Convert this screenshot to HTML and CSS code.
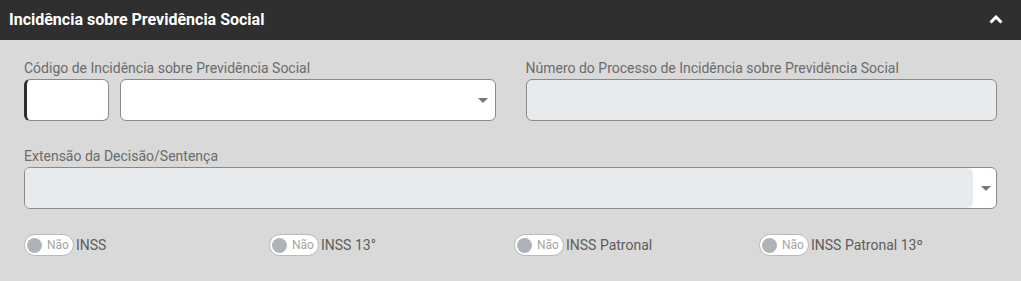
FILE: index.html
```html
<!DOCTYPE html>
<html lang="pt">
<head>
<meta charset="utf-8">
<link rel="stylesheet" href="styles.css">
</head>
<body>
<section class="panel">
  <header class="panel-header">
    <h2 class="panel-title">Incidência sobre Previdência Social</h2>
    <svg class="chevron" width="14" height="9" viewBox="0 0 14 9"><path d="M1.5 7.5 L7 2 L12.5 7.5" fill="none" stroke="#fff" stroke-width="3" stroke-linejoin="miter"/></svg>
  </header>
  <div class="panel-body">
    <div class="row two">
      <div class="field">
        <label class="label">Código de Incidência sobre Previdência Social</label>
        <div class="combo">
          <div class="input code"></div>
          <div class="input select">
            <span class="caret"></span>
          </div>
        </div>
      </div>
      <div class="field">
        <label class="label">Número do Processo de Incidência sobre Previdência Social</label>
        <div class="input disabled"></div>
      </div>
    </div>
    <div class="row">
      <div class="field">
        <label class="label">Extensão da Decisão/Sentença</label>
        <div class="input select2">
          <div class="select2-area"></div>
          <div class="select2-btn"><span class="caret"></span></div>
        </div>
      </div>
    </div>
    <div class="toggles">
      <div class="toggle-item"><span class="toggle"><span class="knob"></span><span class="toggle-text">Não</span></span><span class="toggle-label">INSS</span></div>
      <div class="toggle-item"><span class="toggle"><span class="knob"></span><span class="toggle-text">Não</span></span><span class="toggle-label">INSS 13°</span></div>
      <div class="toggle-item"><span class="toggle"><span class="knob"></span><span class="toggle-text">Não</span></span><span class="toggle-label">INSS Patronal</span></div>
      <div class="toggle-item"><span class="toggle"><span class="knob"></span><span class="toggle-text">Não</span></span><span class="toggle-label">INSS Patronal 13º</span></div>
    </div>
  </div>
</section>
</body>
</html>
```
FILE: styles.css
```css
* { box-sizing: border-box; }
html, body { margin: 0; padding: 0; }
body {
  font-family: Roboto, "Liberation Sans", Arial, sans-serif;
  background: #d9d9d9;
  width: 1021px;
  height: 281px;
  overflow: hidden;
}
.panel { background: #d9d9d9; }
.panel-header {
  height: 40px;
  background: #2f2f2f;
  display: flex;
  align-items: center;
  justify-content: space-between;
  padding: 0 18px 0 9px;
}
.panel-title {
  margin: 0;
  color: #fff;
  font-size: 16px;
  font-weight: 700;
  letter-spacing: 0;
  padding-bottom: 1px;
}
.chevron { display: block; margin-bottom: 2px; }
.panel-body {
  padding: 20px 24px 0 24px;
}
.row { display: grid; grid-template-columns: 1fr; margin-bottom: 26px; }
.row.two { grid-template-columns: 1fr 1fr; column-gap: 30px; margin-bottom: 27px; }
.field { display: flex; flex-direction: column; }
.label {
  font-size: 14px;
  color: #6b6b6b;
  line-height: 16px;
  margin-bottom: 3px;
  white-space: nowrap;
}
.combo { display: flex; gap: 11px; }
.input {
  height: 42px;
  border: 1px solid #8a8a8a;
  border-radius: 6px;
  background: #fff;
}
.input.code {
  width: 85px;
  flex: none;
  border-left: 3px solid #2e2e2e;
}
.input.select {
  flex: 1;
  display: flex;
  align-items: center;
  justify-content: flex-end;
  padding-right: 7px;
}
.caret {
  width: 0; height: 0;
  border-left: 5px solid transparent;
  border-right: 5px solid transparent;
  border-top: 5px solid #777;
  display: block;
}
.input.disabled { background: #e8ebee; }
.input.select2 {
  display: flex;
  overflow: hidden;
  background: #fff;
}
.select2-area {
  flex: 1;
  background: #e8ebee;
  border-radius: 0 6px 6px 0;
}
.select2-btn {
  width: 23px;
  display: flex;
  align-items: center;
  justify-content: center;
  padding-left: 2px;
}
.toggles {
  display: grid;
  grid-template-columns: repeat(4, 245px);
  margin-top: -1px;
}
.toggle-item { display: flex; align-items: center; }
.toggle {
  width: 50px;
  height: 22px;
  border: 1px solid #b9b9b9;
  border-radius: 11px;
  background: #fff;
  display: flex;
  align-items: center;
  padding-left: 2px;
  gap: 5px;
}
.knob {
  width: 15px;
  height: 15px;
  border-radius: 50%;
  background: #aeb3ba;
  flex: none;
}
.toggle-text {
  font-size: 12px;
  color: #a5a5a5;
}
.toggle-label {
  margin-left: 2px;
  font-size: 14px;
  color: #5d5d5d;
}
```
